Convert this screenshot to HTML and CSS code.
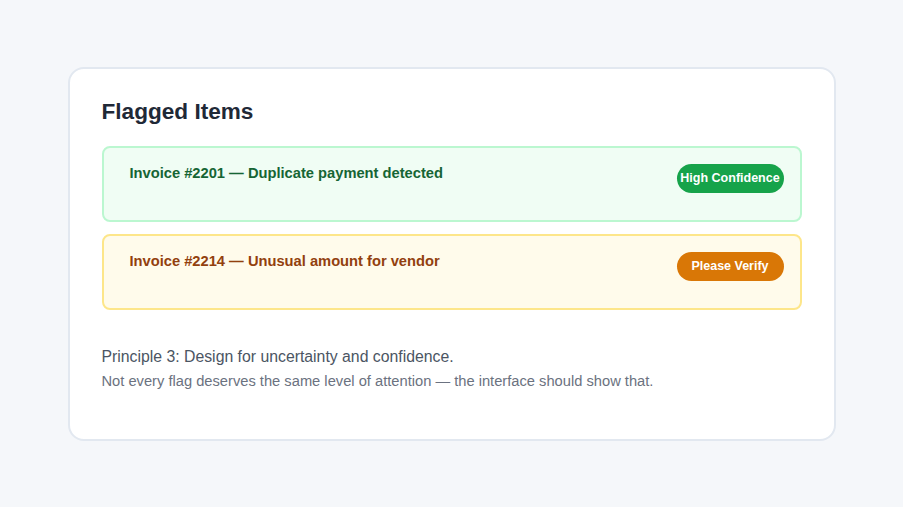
FILE: index.html
```html
<!DOCTYPE html>
<html lang="en">
<head>
    <meta charset="UTF-8">
    <meta name="viewport" content="width=device-width, initial-scale=1.0">
    <title>Flagged Items</title>
    <link rel="stylesheet" href="styles.css">
</head>
<body>
    <div class="card">
        <h1>Flagged Items</h1>
        <div class="flag flag-high">
            <p class="flag-title">Invoice #2201 — Duplicate payment detected</p>
            <span class="badge">High Confidence</span>
        </div>
        <div class="flag flag-verify">
            <p class="flag-title">Invoice #2214 — Unusual amount for vendor</p>
            <span class="badge">Please Verify</span>
        </div>
        <div class="note">
            <p class="principle">Principle 3: Design for uncertainty and confidence.</p>
            <p class="caption">Not every flag deserves the same level of attention — the interface should show that.</p>
        </div>
    </div>
</body>
</html>
```

FILE: styles.css
```css
body {
    margin: 0;
    height: 100vh;
    display: flex;
    align-items: center;
    justify-content: center;
    font-family: "Liberation Sans", Arial, sans-serif;
    background: #f5f7fa;
}

.card {
    box-sizing: border-box;
    width: 768px;
    padding: 30px 32px 50px;
    background: #fff;
    border: 2px solid #e2e8f0;
    border-radius: 16px;
}

h1 {
    margin: 0 0 21px;
    font-size: 22.6px;
    color: #1f2937;
}

.flag {
    display: flex;
    justify-content: space-between;
    align-items: flex-start;
    min-height: 40px;
    padding: 16px;
    margin-bottom: 12px;
    border: 2px solid;
    border-radius: 8px;
}

.flag-title {
    margin: 0;
    padding-left: 10px;
    font-size: 14.7px;
    line-height: 18px;
    font-weight: bold;
}

.flag-high {
    background: #f0fdf4;
    border-color: #bbf7d0;
}

.flag-high .flag-title {
    color: #166534;
}

.flag-high .badge {
    background: #16a34a;
}

.flag-verify {
    background: #fffbeb;
    border-color: #fde68a;
}

.flag-verify .flag-title {
    color: #92400e;
}

.flag-verify .badge {
    background: #d97706;
}

.badge {
    width: 107px;
    height: 29px;
    line-height: 29px;
    text-align: center;
    border-radius: 15px;
    color: #fff;
    font-size: 12.5px;
    font-weight: bold;
}

.note {
    margin-top: 38px;
}

.principle {
    margin: 0 0 7px;
    font-size: 15.8px;
    color: #4b5563;
}

.caption {
    margin: 0;
    font-size: 14.7px;
    color: #6b7280;
}
```
